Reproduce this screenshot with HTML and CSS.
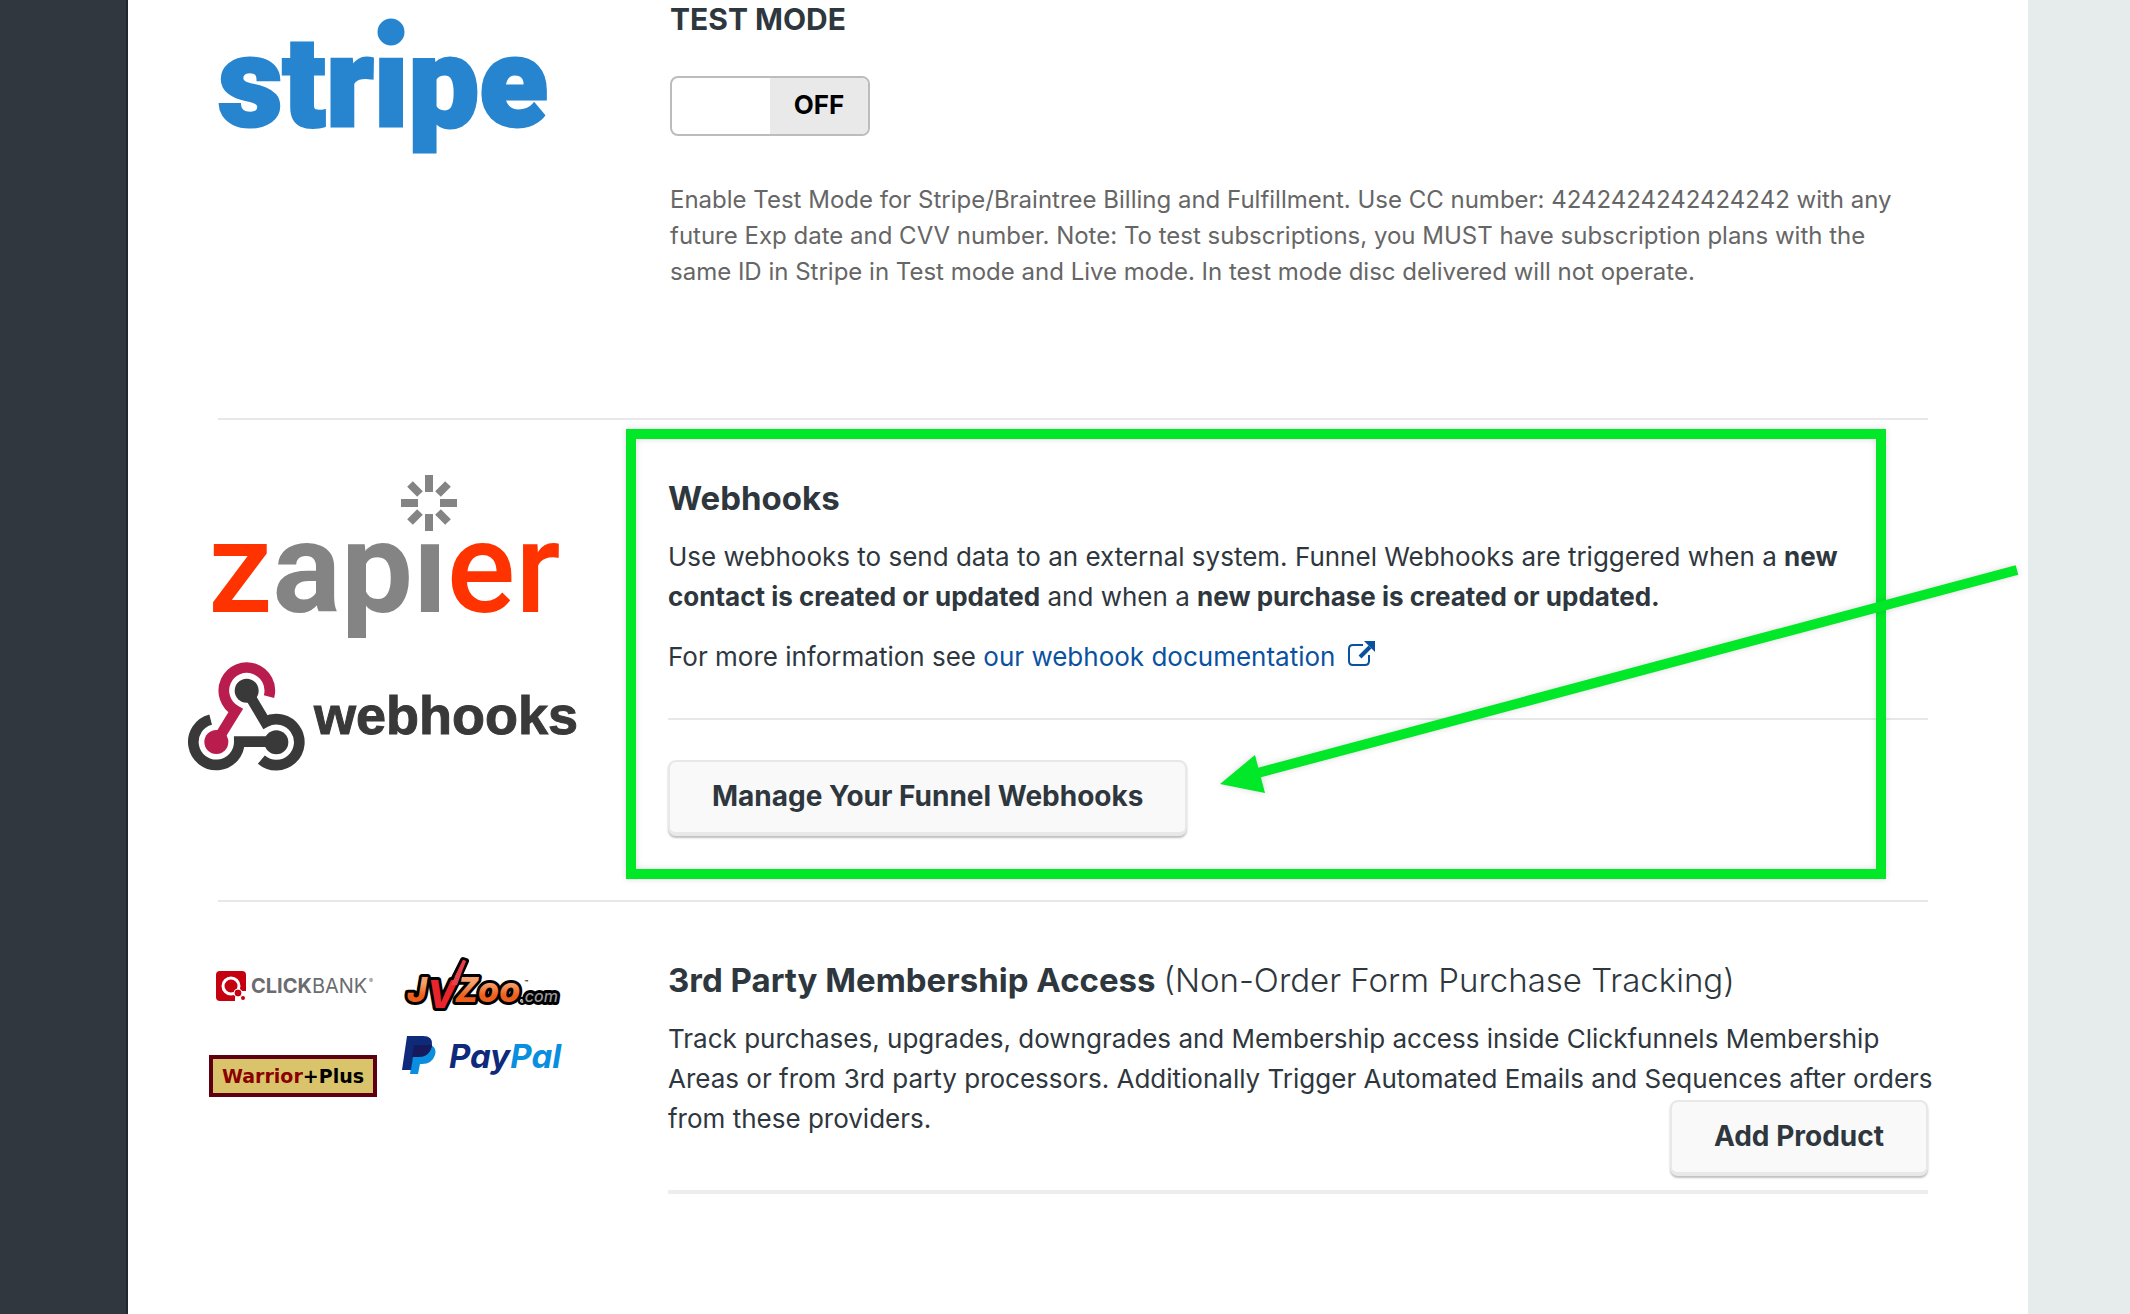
FILE: index.html
```html
<!DOCTYPE html>
<html lang="en">
<head>
    <meta charset="UTF-8">
    <meta name="viewport" content="width=device-width, initial-scale=1.0">
    <title>Funnel Settings</title>
    <link rel="stylesheet" href="styles.css">
</head>
<body>
    <div class="page">
        <aside class="sidebar"></aside>
        <main class="content">
            <section class="row row-stripe">
                <div class="logos">
                    <svg class="logo-stripe" width="340" height="160" role="img" aria-label="stripe">
                        <text x="0" y="126">stripe</text>
                        <rect class="gap" x="156" y="30" width="34" height="25"/>
                        <circle cx="173" cy="32" r="12"/>
                    </svg>
                </div>
                <div class="details">
                    <h3>TEST MODE</h3>
                    <label class="switch">
                        <input type="checkbox" aria-label="Test mode">
                        <span class="switch-handle"></span>
                        <span class="switch-state">OFF</span>
                    </label>
                    <p class="note">Enable Test Mode for Stripe/Braintree Billing and Fulfillment. Use CC number: 4242424242424242 with any<br>
                        future Exp date and CVV number. Note: To test subscriptions, you MUST have subscription plans with the<br>
                        same ID in Stripe in Test mode and Live mode. In test mode disc delivered will not operate.</p>
                </div>
            </section>

            <section class="row row-webhooks">
                <div class="logos">
                    <svg class="logo-zapier" width="360" height="184" viewBox="208 470 360 184" role="img" aria-label="zapier">
                        <text x="208" y="612"><tspan class="orange">z</tspan><tspan class="grey">api</tspan><tspan class="orange">er</tspan></text>
                        <rect x="400" y="500" width="60" height="37" fill="#fff"/>
                        <g class="rays" transform="translate(429 503)">
                            <path d="M0-28V-11M0 11V28M-28 0H-11M11 0H28M-19-19L-9-9M9 9L19 19M19-19L9-9M-9 9L-19 19"/>
                        </g>
                    </svg>
                    <svg class="logo-webhooks" width="394" height="110" role="img" aria-label="webhooks">
                        <g transform="scale(.3333)">
                            <g class="ring dark">
                                <path d="M68 173A69 69 0 1 0 154 239H265"/>
                                <path d="M176 86L232 180A69 69 0 1 1 220 293"/>
                            </g>
                            <path class="ring pink" d="M243 104A69 69 0 1 0 143 146L85 240"/>
                            <circle cx="176" cy="86" r="36" fill="#393939"/>
                            <circle cx="265" cy="241" r="36" fill="#393939"/>
                            <circle cx="85" cy="240" r="36" fill="#b91d4e"/>
                        </g>
                        <text x="126" y="72">webhooks</text>
                    </svg>
                </div>
                <div class="details">
                    <h2>Webhooks</h2>
                    <p>Use webhooks to send data to an external system. Funnel Webhooks are triggered when a <strong>new<br>
                        contact is created or updated</strong> and when a <strong>new purchase is created or updated.</strong></p>
                    <p>For more information see <a href="#">our webhook documentation
                        <svg class="external" width="28" height="28" viewBox="0 0 28 28">
                            <path d="M16 5H6Q2 5 2 9V21Q2 25 6 25H18Q22 25 22 21V15" fill="none" stroke="currentColor" stroke-width="2"/>
                            <path d="M13 17L23 7" stroke="currentColor" stroke-width="4"/>
                            <path d="M17 1H28V12Z" fill="currentColor"/>
                        </svg></a></p>
                    <hr>
                    <button type="button" class="btn">Manage Your Funnel Webhooks</button>
                </div>

                <div class="highlight"></div>
                <svg class="arrow" width="804" height="240" viewBox="1216 560 804 240">
                    <path d="M1254 774L2017 570" fill="none" stroke="#00e828" stroke-width="10"/>
                    <path d="M1220 784L1255 755L1265 793Z" fill="#00e828"/>
                </svg>
            </section>

            <section class="row row-products">
                <div class="logos logo-grid">
                    <svg width="160" height="50" viewBox="216 960 160 50" role="img" aria-label="ClickBank">
                        <rect x="216" y="971" width="30" height="30" rx="4" fill="#c5000f"/>
                        <path d="M235 1001V996L240 991H246V1001Z" fill="#fff"/>
                        <circle cx="231" cy="986" r="8" fill="#c5000f" stroke="#fff" stroke-width="3"/>
                        <circle cx="238" cy="993" r="4" fill="#c5000f" stroke="#fff"/>
                        <circle cx="243" cy="998" r="2" fill="#c5000f"/>
                        <text class="clickbank" x="251" y="993"><tspan class="heavy">CLICK</tspan>BANK</text>
                        <text class="reg" x="369" y="983">®</text>
                    </svg>
                    <svg class="logo-jvzoo" width="160" height="60" viewBox="406 956 160 60" role="img" aria-label="JVZoo.com">
                        <defs>
                            <linearGradient id="zoo" x1="0" y1="0" x2="0" y2="1">
                                <stop offset=".35" stop-color="#f6a06c"/>
                                <stop offset=".65" stop-color="#ee5f1c"/>
                            </linearGradient>
                        </defs>
                        <text class="com" x="524" y="1002">.com</text>
                        <text class="zoo" x="411" y="1002">J</text>
                        <text class="zoo" x="459" y="1002">Zoo</text>
                        <path d="M447 1000L467 960L470 961L457 990Z" fill="#e8252a"/>
                        <text class="vee" x="431" y="1008">V</text>
                        <path class="flat" d="M455 985L467 960L470 961L461 985Z" fill="#e8404a"/>
                        <text class="tm" x="528" y="985">™</text>
                    </svg>
                    <div class="warrior"><span>Warrior</span>+Plus</div>
                    <svg class="logo-paypal" width="170" height="46" viewBox="402 1034 170 46" role="img" aria-label="PayPal">
                        <path d="M414 1044H431Q437 1047 435 1054Q432 1063 422 1063H420L418 1073H410Z" fill="#0a8ee0"/>
                        <path d="M407 1035H423Q433 1035 432 1044Q430 1056 418 1056H413L411 1069H402Z" fill="#0f2a7a"/>
                        <path d="M414 1044H432Q430 1056 418 1056H412Z" fill="#151a5c"/>
                        <text x="449" y="1067"><tspan class="navy">Pay</tspan><tspan class="sky">Pal</tspan></text>
                    </svg>
                </div>
                <div class="details">
                    <h2>3rd Party Membership Access <span class="light">(Non-Order Form Purchase Tracking)</span></h2>
                    <p>Track purchases, upgrades, downgrades and Membership access inside Clickfunnels Membership<br>
                        Areas or from 3rd party processors. Additionally Trigger Automated Emails and Sequences after orders<br>
                        from these providers.</p>
                    <div class="actions">
                        <button type="button" class="btn">Add Product</button>
                    </div>
                </div>
            </section>
        </main>
        <aside class="gutter"></aside>
    </div>
</body>
</html>
```
FILE: styles.css
```css
* {
    box-sizing: border-box;
}

body {
    margin: 0;
    font-family: "Inter", sans-serif;
    font-size: 26px;
    line-height: 40px;
    color: #2f373e;
    background: #fff;
}

.page {
    display: flex;
    min-height: 100vh;
    overflow: hidden;
}

.sidebar {
    width: 128px;
    flex-shrink: 0;
    background: #30373f;
    border-right: 2px solid #20272e;
}

.gutter {
    width: 102px;
    flex-shrink: 0;
    background: #e6ebec;
}

.content {
    flex: 1;
    min-width: 0;
    padding: 0 100px 0 90px;
}

.row {
    display: grid;
    grid-template-columns: 450px minmax(0, 1fr);
    position: relative;
}

.row-stripe {
    padding-bottom: 128px;
}

.row-webhooks {
    padding: 58px 0 64px;
    border-top: 2px solid #e8e8e8;
}

.row-products {
    padding-top: 58px;
    border-top: 2px solid #e8e8e8;
}

h2,
h3,
p {
    margin: 0;
    white-space: nowrap;
}

h2 {
    font-size: 33px;
    line-height: 40px;
    margin-bottom: 19px;
}

h3 {
    font-size: 30px;
    line-height: 38px;
    margin-bottom: 38px;
}

p {
    margin-bottom: 20px;
}

strong {
    font-weight: 700;
}

.light {
    font-weight: 300;
}

a {
    color: #0a52a0;
    text-decoration: none;
}

.external {
    vertical-align: -2px;
    margin-left: 4px;
}

hr {
    margin: 41px 0 40px;
    border: 0;
    border-top: 2px solid #e8e8e8;
}

.row-stripe .details {
    padding-left: 2px;
}

.note {
    margin: 46px 0 0;
    font-size: 24px;
    line-height: 36px;
    color: #666;
}

/* test mode toggle */
.switch {
    display: flex;
    width: 200px;
    height: 60px;
    border: 2px solid #bcbcbc;
    border-radius: 8px;
    overflow: hidden;
    cursor: pointer;
}

.switch input {
    position: absolute;
    opacity: 0;
}

.switch-handle,
.switch-state {
    flex: 1;
}

.switch-state {
    background: #e9e9e9;
    color: #000;
    font-weight: 700;
    line-height: 54px;
    text-align: center;
}

.btn {
    height: 76px;
    padding: 0 42px 2px;
    font-family: inherit;
    font-size: 28px;
    font-weight: 700;
    color: #2f373e;
    background: #f9f9f9;
    border: 2px solid #e8e8e8;
    border-bottom-width: 4px;
    border-radius: 8px;
    box-shadow: 0 2px 2px rgba(0, 0, 0, 0.25);
    cursor: pointer;
    display: block;
}

.actions {
    display: flex;
    justify-content: flex-end;
    margin-top: -59px;
    padding-bottom: 14px;
    border-bottom: 4px solid #ededed;
}

/* callout drawn over the webhooks row */
.highlight {
    position: absolute;
    top: 9px;
    right: 42px;
    bottom: 21px;
    left: 408px;
    border: 10px solid #00e828;
    filter: drop-shadow(0 0 3px rgba(0, 0, 0, 0.15));
    pointer-events: none;
}

.arrow {
    position: absolute;
    top: 140px;
    right: -92px;
    filter: drop-shadow(0 0 3px rgba(0, 0, 0, 0.15));
    pointer-events: none;
}

/* logos */
.logos svg {
    display: block;
    overflow: visible;
}

.logo-stripe {
    fill: #2785d0;
    font: 900 126px "Roboto", sans-serif;
    stroke: #2785d0;
    stroke-width: 3px;
}

.gap {
    fill: #fff;
    stroke: none;
}

.logo-zapier {
    margin: -8px 0 0 -10px;
    font: 700 128px "Roboto", sans-serif;
}

.orange {
    fill: #ff3300;
    font-weight: 500;
}

.grey {
    fill: #848484;
}

.rays {
    fill: none;
    stroke: #848484;
    stroke-width: 8px;
}

.logo-webhooks {
    margin: 8px 0 0 -30px;
    font: 700 54px "Liberation Sans", sans-serif;
}

.logo-webhooks text {
    fill: #393939;
    stroke: #393939;
    stroke-width: 1px;
}

.ring {
    fill: none;
    stroke-width: 32px;
}

.dark {
    stroke: #393939;
}

.pink {
    stroke: #b91d4e;
}

.logo-grid {
    display: grid;
    grid-template-columns: 186px 170px;
    grid-template-rows: 75px 62px;
    align-content: start;
    margin-left: -2px;
}

.logo-jvzoo {
    margin-top: -4px;
    font-family: "Inter", sans-serif;
    font-style: italic;
    font-weight: 800;
    stroke: #000;
    stroke-width: 6px;
    stroke-linejoin: round;
    paint-order: stroke;
}

.flat,
.tm {
    stroke: none;
}

.zoo {
    font-size: 34px;
    fill: url(#zoo);
}

.vee {
    font-size: 38px;
    fill: #e8252a;
}

.com {
    font-size: 16px;
    font-weight: 500;
    fill: #999;
}

.tm {
    font-size: 6px;
}

.clickbank {
    font: 400 20px "Inter", sans-serif;
    fill: #6b6c6f;
}

.heavy {
    font-weight: 700;
}

.reg {
    font-size: 6px;
    fill: #6b6c6f;
}

.warrior {
    width: 168px;
    height: 42px;
    margin: 20px 0 0 -7px;
    border: 4px solid #5e0010;
    background: #d9c46b;
    font: 700 19px "DejaVu Sans", sans-serif;
    line-height: 34px;
    text-align: center;
    color: #000;
}

.warrior span {
    color: #8b0000;
}

.logo-paypal {
    font: italic 700 33px "Inter", sans-serif;
}

.navy {
    fill: #0f2a7a;
}

.sky {
    fill: #0a8ee0;
}
```
